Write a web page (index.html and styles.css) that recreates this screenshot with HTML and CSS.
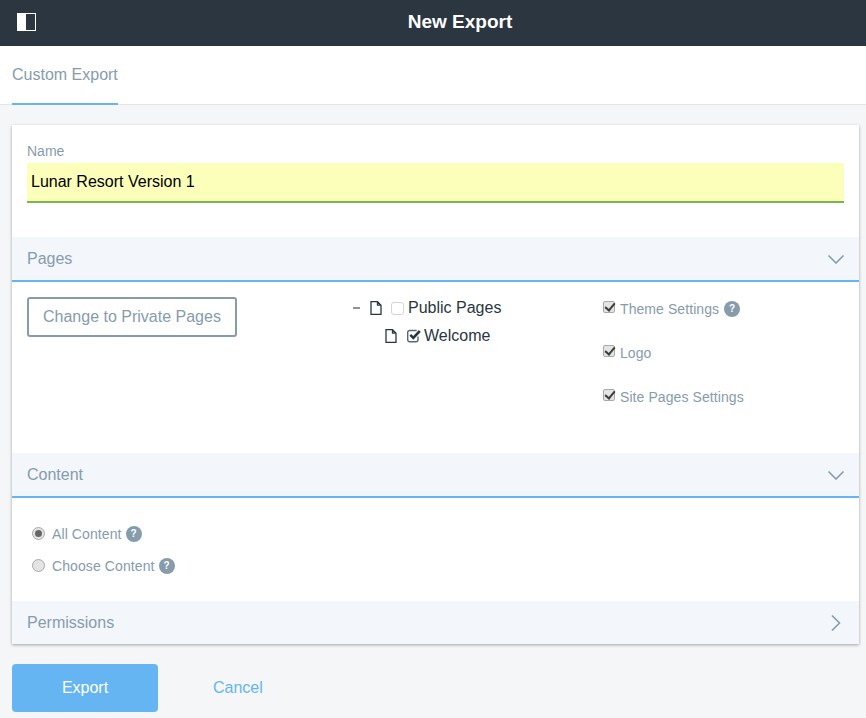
FILE: index.html
```html
<!DOCTYPE html>
<html lang="en">
<head>
    <meta charset="UTF-8">
    <title>New Export</title>
    <link rel="stylesheet" href="styles.css">
</head>
<body>

<div class="topbar">
    <svg class="topbar-icon" width="20" height="18" viewBox="0 0 20 18">
        <rect x="0.5" y="0.5" width="18" height="17" fill="none" stroke="#fff"/>
        <rect x="0" y="0" width="9" height="18" fill="#fff"/>
    </svg>
    <h1 class="topbar-title">New Export</h1>
</div>

<div class="tabs">
    <a class="tab" href="javascript:;">Custom Export</a>
</div>

<div class="main">
    <div class="panel">
        <div class="name-group">
            <label class="name-label">Name</label>
            <input class="name-input" type="text" value="Lunar Resort Version 1">
        </div>

        <div class="sheet-head open">
            <span>Pages</span>
            <svg class="chev" width="18" height="10" viewBox="0 0 18 10"><path d="M1.500 1.500l7.500 7.500 7.500-7.500"/></svg>
        </div>
        <div class="pages-body">
            <div class="pages-left">
                <a class="btn-outline" href="javascript:;">Change to Private Pages</a>
            </div>
            <div class="tree">
                <div class="tree-row">
                    <span class="tree-dash"></span>
                    <svg class="doc" width="12" height="14" viewBox="0 0 12 14"><path d="M1 .7h6.500L11 4.200v9.100H1zM7.500.7v3.500H11"/></svg>
                    <span class="tree-box"></span>
                    <span>Public Pages</span>
                </div>
                <div class="tree-row child">
                    <svg class="doc" width="12" height="14" viewBox="0 0 12 14"><path d="M1 .7h6.500L11 4.200v9.100H1zM7.500.7v3.500H11"/></svg>
                    <svg class="tree-check" width="14" height="14" viewBox="0 0 14 14">
                        <path class="check-box" d="M11 7.500v3.300a2 2 0 0 1-2 2H2.700a2 2 0 0 1-2-2V3.500a2 2 0 0 1 2-2h7"/>
                        <path class="check-mark" d="M3.300 5.800l3 3 6.500-6.800"/>
                    </svg>
                    <span>Welcome</span>
                </div>
            </div>
            <div class="options">
                <label class="option"><input type="checkbox" checked disabled>Theme Settings <span class="help">?</span></label>
                <label class="option"><input type="checkbox" checked disabled>Logo</label>
                <label class="option"><input type="checkbox" checked disabled>Site Pages Settings</label>
            </div>
        </div>

        <div class="sheet-head open">
            <span>Content</span>
            <svg class="chev" width="18" height="10" viewBox="0 0 18 10"><path d="M1.500 1.500l7.500 7.500 7.500-7.500"/></svg>
        </div>
        <div class="content-body">
            <label class="radio-row"><input type="radio" name="content" checked>All Content <span class="help">?</span></label>
            <label class="radio-row"><input type="radio" name="content">Choose Content <span class="help">?</span></label>
        </div>

        <div class="sheet-head closed">
            <span>Permissions</span>
            <svg class="chev" width="10" height="18" viewBox="0 0 10 18"><path d="M1 1.500l7.500 7.500-7.500 7.500"/></svg>
        </div>
    </div>

    <div class="actions">
        <a class="btn-primary" href="javascript:;">Export</a>
        <a class="btn-link" href="javascript:;">Cancel</a>
    </div>
</div>

</body>
</html>
```

FILE: styles.css
```css
*{
    margin: 0;
    padding: 0;
    box-sizing: border-box;
}

body{
    background-color: #f5f6f8;
    font-family: "Liberation Sans", Arial, sans-serif;
    color: #869cad;
    overflow: hidden;
}

a{
    text-decoration: none;
}

.topbar{
    height: 46px;
    /*title is centred on the space right of the icon*/
    padding: 0 0 2px 54px;
    background-color: #2b3640;
    display: flex;
    align-items: center;
    justify-content: center;
    position: relative;
}

.topbar-icon{
    position: absolute;
    left: 17px;
    top: 13px;
}

.topbar-title{
    font-size: 19px;
    font-weight: bold;
    color: #fff;
}

.tabs{
    height: 59px;
    background-color: #fff;
    border-bottom: 1px solid #e2e5ea;
    padding-left: 12px;
    display: flex;
}

.tab{
    height: 59px;
    line-height: 57px;
    font-size: 16px;
    color: #869cad;
    border-bottom: 2px solid #65b5f2;
}

.main{
    padding: 20px 7px 0 12px;
}

.panel{
    background-color: #fff;
    height: 519px;
    box-shadow: 0 1px 3px rgba(0, 0, 0, 0.35);
}

.name-group{
    height: 112px;
    padding: 18px 15px 0;
}

.name-label{
    display: block;
    font-size: 14px;
    line-height: 16px;
    margin-bottom: 4px;
}

.name-input{
    display: block;
    width: 100%;
    height: 40px;
    border: 0;
    border-bottom: 2px solid #7ab648;
    background-color: #fbffba;
    padding: 0 4px;
    font-family: inherit;
    font-size: 16px;
    color: #000;
    outline: none;
}

.sheet-head{
    height: 43px;
    padding: 0 14px 0 15px;
    background-color: #f3f6fa;
    display: flex;
    align-items: center;
    justify-content: space-between;
    font-size: 16px;
}

.sheet-head.open{
    height: 45px;
    border-bottom: 2px solid #65b5f2;
}

.sheet-head.closed{
    padding-right: 18px;
}

.chev{
    fill: none;
    stroke: #869cad;
    stroke-width: 1.6;
}

.pages-body{
    height: 171px;
    padding: 15px 15px 0;
    display: flex;
}

.pages-left{
    width: 326px;
}

.btn-outline{
    display: inline-block;
    height: 40px;
    line-height: 36px;
    padding: 0 14px;
    border: 2px solid #869cad;
    border-radius: 3px;
    font-size: 16px;
    color: #869cad;
}

.tree{
    width: 250px;
    margin-top: -3px;
    font-size: 16px;
    color: #2b3640;
}

.tree-row{
    height: 28px;
    display: flex;
    align-items: center;
}

.tree-row.child{
    padding-left: 32px;
}

.tree-dash{
    width: 7px;
    height: 2px;
    background-color: #8d949b;
    margin-right: 10px;
}

.doc{
    fill: none;
    stroke: #2b3640;
    stroke-width: 1.3;
}

.tree-box{
    width: 13px;
    height: 13px;
    border: 1px solid #d5d5d5;
    border-radius: 3px;
    margin: 0 4px 0 9px;
}

.tree-check{
    margin: 0 3px 0 10px;
    fill: none;
}

.check-box{
    stroke: #5b6670;
    stroke-width: 1.4;
}

.check-mark{
    stroke: #2b3640;
    stroke-width: 2.6;
}

.options{
    padding-top: 2px;
}

.option{
    height: 44px;
    display: flex;
    align-items: flex-start;
    font-size: 14px;
    line-height: 20px;
    letter-spacing: 0.08px;
}

.option input{
    appearance: none;
    position: relative;
    width: 12px;
    height: 12px;
    margin: 2px 5px 0 0;
    border: 1px solid #a9a9a9;
    border-radius: 2px;
    background-color: #e4e4e4;
}

/*the tick*/
.option input::after{
    content: "";
    position: absolute;
    left: 3px;
    top: -1px;
    width: 4px;
    height: 8px;
    border: solid #3c3c3c;
    border-width: 0 2px 2px 0;
    transform: rotate(40deg);
}

.help{
    display: inline-block;
    width: 16px;
    height: 16px;
    margin: 2px 0 0 4px;
    border-radius: 50%;
    background-color: #869cad;
    color: #fff;
    font-size: 10px;
    font-weight: bold;
    line-height: 16px;
    text-align: center;
}

.option .help{
    margin-left: 5px;
}

.content-body{
    height: 103px;
    padding: 26px 20px 0;
}

.radio-row{
    height: 32px;
    display: flex;
    align-items: flex-start;
    font-size: 14px;
    line-height: 20px;
    letter-spacing: 0.1px;
}

.radio-row input{
    appearance: none;
    position: relative;
    width: 13px;
    height: 13px;
    margin: 3px 7px 0 0;
    border: 1px solid #a9a9a9;
    border-radius: 50%;
    background-color: #e4e4e4;
}

.radio-row input:checked::after{
    content: "";
    position: absolute;
    left: 2px;
    top: 2px;
    width: 7px;
    height: 7px;
    border-radius: 50%;
    background-color: #666;
}

.actions{
    display: flex;
    align-items: center;
    margin-top: 20px;
}

.btn-primary{
    width: 146px;
    height: 48px;
    line-height: 48px;
    border-radius: 4px;
    background-color: #65b5f2;
    color: #fff;
    font-size: 16px;
    text-align: center;
}

.btn-link{
    margin-left: 55px;
    font-size: 16px;
    color: #65b5f2;
}
```
